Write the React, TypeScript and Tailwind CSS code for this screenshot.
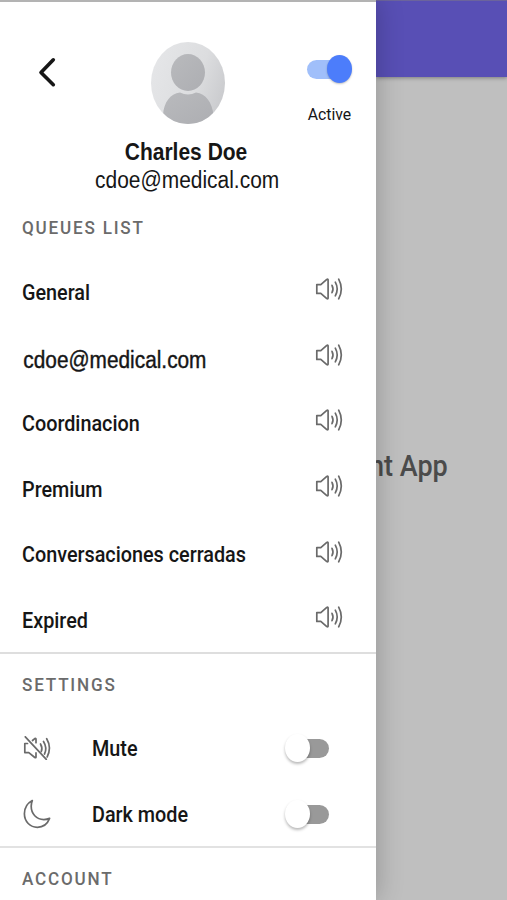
import React, { useState } from 'react';

const QUEUES = ['General', 'cdoe@medical.com', 'Coordinacion', 'Premium', 'Conversaciones cerradas', 'Expired'];

const VolumeIcon: React.FC = () => (
  <svg width="28" height="24" viewBox="0 0 28 24" fill="none" stroke="#6a6a6a" strokeWidth="1.7" strokeLinecap="round" strokeLinejoin="round">
    <path d="M1.8 7.6h4l6-5.2q1.3-.7 1.3.6v18q0 1.3-1.3.6l-6-5.2h-4z" />
    <path d="M17 8.3q2 3.7 0 7.4" />
    <path d="M20.3 5.2q3.8 6.8 0 13.6" />
    <path d="M23.7 2.2q5.2 9.8 0 19.6" />
  </svg>
);

const MuteIcon: React.FC = () => (
  <svg width="28" height="24" viewBox="0 0 28 24" fill="none" stroke="#6a6a6a" strokeWidth="1.7" strokeLinecap="round" strokeLinejoin="round">
    <path d="M4.5 7.5H1.8v9.1h4l6 4.9q1.2.6 1.2-.6v-4" />
    <path d="M9.5 4.5l2.3-1.9q1.2-.6 1.2.6v3.5" />
    <path d="M17.5 8q2.3 4 .8 7.5" />
    <path d="M20.5 5.5q4 6.5 1 12.5" />
    <path d="M23.7 2.7q5.2 8.8 .5 18.2" />
    <path d="M2.3 .8L23.3 23.3" />
  </svg>
);

const MoonIcon: React.FC = () => (
  <svg width="28" height="30" viewBox="0 0 28 30" fill="none" stroke="#6a6a6a" strokeWidth="1.7" strokeLinejoin="round">
    <path d="M9.3 1.6C4.5 4.2 1.4 9.2 1.4 14.8c0 7.8 5.8 13.5 13 13.5 5.3 0 10-3.3 12.2-8.9-2 .9-3.8 1.2-5.8 1.2-7.3 0-12.6-5.8-12.6-13.3 0-2 .3-3.9 1.1-5.7z" />
  </svg>
);

const Avatar: React.FC = () => (
  <svg width="74" height="82" viewBox="0 0 74 82" className="block">
    <defs>
      <linearGradient id="avatarBg" x1="0" y1="0.3" x2="1" y2="0.7">
        <stop offset="0" stopColor="#e5e6e8" />
        <stop offset="0.6" stopColor="#dcdddf" />
        <stop offset="1" stopColor="#c9cacd" />
      </linearGradient>
      <linearGradient id="avatarFg" x1="0" y1="0" x2="1" y2="1">
        <stop offset="0" stopColor="#b9babd" />
        <stop offset="1" stopColor="#adaeb2" />
      </linearGradient>
      <clipPath id="avatarClip">
        <ellipse cx="37" cy="41" rx="37" ry="41" />
      </clipPath>
    </defs>
    <g clipPath="url(#avatarClip)">
      <rect width="74" height="82" fill="url(#avatarBg)" />
      <ellipse cx="37" cy="30.5" rx="17" ry="18.5" fill="url(#avatarFg)" />
      <path d="M12 73C13 60 19 52 29 50.5Q37 54.5 45 50.5C55 52 61 60 62.5 73V82H12z" fill="url(#avatarFg)" />
    </g>
  </svg>
);

const SectionTitle: React.FC<{ children: string }> = ({ children }) => (
  <h3 className="origin-left scale-x-[0.9] whitespace-nowrap text-[19px] leading-6 font-medium tracking-[2px] text-[#6b6b6b]">
    {children}
  </h3>
);

const Toggle: React.FC<{ on: boolean; onClick: () => void }> = ({ on, onClick }) => (
  <button onClick={onClick} className="flex h-7 w-[45px] items-center">
    <span
      className={`h-[19px] w-[38px] shrink-0 rounded-full ${on ? 'bg-[#a0bffa]' : 'order-2 -ml-[19px] bg-[#999999]'}`}
    ></span>
    <span
      className={`relative h-7 w-[25px] shrink-0 rounded-[50%] ${
        on ? '-ml-[18px] bg-[#4c7dfb] shadow-[0_1px_2px_rgba(0,0,0,0.25)]' : 'bg-white shadow-[0_2px_3px_rgba(0,0,0,0.28)]'
      }`}
    ></span>
  </button>
);

const App: React.FC = () => {
  const [active, setActive] = useState(true);
  const [mute, setMute] = useState(false);
  const [dark, setDark] = useState(false);

  return (
    <div className="flex h-[900px] w-[507px] overflow-hidden bg-[#bfbfbf] font-['Roboto','Liberation_Sans',sans-serif]">
      <aside className="z-10 h-full w-[376px] shrink-0 border-t-2 border-[#b3b3b3] bg-white text-[#161616] shadow-[0_0_26px_rgba(0,0,0,0.24)]">
        <header className="flex h-[192px] flex-col items-center">
          <div className="flex h-[134px] w-full shrink-0 items-start justify-between pr-6 pl-[38px] pt-10">
            <button className="mt-[15px] w-[45px]">
              <svg width="18" height="31" viewBox="0 0 18 31" fill="none" stroke="#161616" strokeWidth="3.6" strokeLinecap="round" strokeLinejoin="round">
                <path d="M15.3 2.8L3 15.5L15.3 27.7" />
              </svg>
            </button>
            <div className="-ml-[15px]"><Avatar /></div>
            <div className="mt-[13px] flex w-[45px] flex-col items-center">
              <Toggle on={active} onClick={() => setActive(!active)} />
              <span className="mt-[19px] scale-x-[0.93] text-[17px] leading-6">Active</span>
            </div>
          </div>
          <h2 className="mr-[3px] scale-x-[0.875] font-['Liberation_Sans',sans-serif] text-[24px] leading-8 font-bold whitespace-nowrap">Charles Doe</h2>
          <p className="-mt-1 mr-[2px] scale-x-[0.91] font-['Liberation_Sans',sans-serif] text-[23px] leading-8 whitespace-nowrap">cdoe@medical.com</p>
        </header>

        <section className="h-[458px] px-[22px] pt-[22px]">
          <SectionTitle>QUEUES LIST</SectionTitle>
          <ul className="pt-5">
            {QUEUES.map((queue) => (
              <li key={queue} className="flex h-[65.6px] items-center justify-between pr-[11px]">
                <span
                  className={`origin-left whitespace-nowrap leading-7 ${
                    queue.includes('@')
                      ? "pt-[3px] pl-[1.5px] scale-x-[0.905] font-['Liberation_Sans',sans-serif] text-[23px] [-webkit-text-stroke:0.4px_#161616]"
                      : 'scale-x-[0.9] text-[22px] font-medium'
                  }`}
                >
                  {queue}
                </span>
                <span className="-mt-[7px]"><VolumeIcon /></span>
              </li>
            ))}
          </ul>
        </section>

        <section className="h-[194px] border-t-2 border-[#dedede] px-[22px] pt-[19px]">
          <SectionTitle>SETTINGS</SectionTitle>
          <div className="mt-[18px] flex h-[66px] items-center pr-6">
            <span className="w-[70px] pl-px"><MuteIcon /></span>
            <span className="origin-left scale-x-[0.9] text-[22px] font-medium">Mute</span>
            <span className="ml-auto"><Toggle on={mute} onClick={() => setMute(!mute)} /></span>
          </div>
          <div className="flex h-[66px] items-center pr-6">
            <span className="w-[70px] pl-px"><MoonIcon /></span>
            <span className="origin-left scale-x-[0.9] text-[22px] font-medium">Dark mode</span>
            <span className="ml-auto"><Toggle on={dark} onClick={() => setDark(!dark)} /></span>
          </div>
        </section>

        <section className="border-t-2 border-[#e2e2e2] px-[22px] pt-[19px]">
          <SectionTitle>ACCOUNT</SectionTitle>
        </section>
      </aside>

      <main className="flex flex-1 flex-col">
        <div className="h-[77px] border-t border-[#6b649c] bg-[#584fb5] shadow-[0_1px_4px_rgba(0,0,0,0.35)]"></div>
        <div className="flex h-[777px] items-center">
          <h1 className="-ml-[7px] origin-left scale-x-[0.9] text-[30px] font-medium whitespace-nowrap text-[#4b4b4b]">nt App</h1>
        </div>
      </main>
    </div>
  );
};

export default App;
